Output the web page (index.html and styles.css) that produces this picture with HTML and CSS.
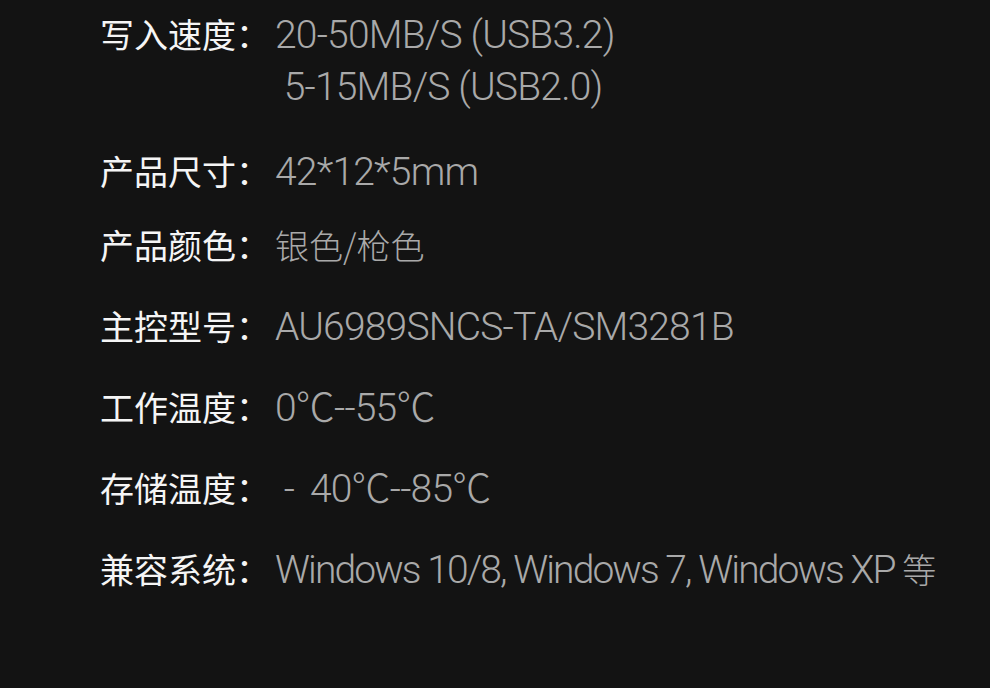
FILE: index.html
```html
<!DOCTYPE html>
<html lang="zh-CN">
<head>
    <meta charset="UTF-8">
    <meta name="viewport" content="width=device-width, initial-scale=1.0">
    <title>产品参数</title>
    <link rel="stylesheet" href="styles.css">
</head>
<body>
    <div class="specs">
        <!-- 写入速度 -->
        <div class="row row-first">
            <span class="label">写入速度：</span>
            <span class="value">20-50MB/S (USB3.2)<br>&nbsp;5-15MB/S (USB2.0)</span>
        </div>

        <div class="row row-tight">
            <span class="label">产品尺寸：</span>
            <span class="value">42*12*5mm</span>
        </div>

        <div class="row">
            <span class="label">产品颜色：</span>
            <span class="value"><span class="cjk">银色/枪色</span></span>
        </div>

        <div class="row">
            <span class="label">主控型号：</span>
            <span class="value">AU6989SNCS-TA/SM3281B</span>
        </div>

        <div class="row">
            <span class="label">工作温度：</span>
            <span class="value">0℃--55℃</span>
        </div>

        <div class="row">
            <span class="label">存储温度：</span>
            <span class="value">&nbsp;- &thinsp;40℃--85℃</span>
        </div>

        <div class="row">
            <span class="label">兼容系统：</span>
            <span class="value narrow">Windows 10/8, Windows 7, Windows XP <span class="cjk">等</span></span>
        </div>
    </div>
</body>
</html>
```

FILE: styles.css
```css
body {
    margin: 0;
    background-color: #131313;
    font-family: "Noto Sans CJK SC", "Noto Sans", sans-serif;
    height: 688px;
    overflow: hidden;
}

.specs {
    padding: 8px 0 0 100px;
}

.row {
    display: flex;
    align-items: baseline;
    height: 52px;
    margin-bottom: 29px;
    line-height: 52px;
}

.row-first {
    height: auto;
    margin-bottom: 32px;
}

.row-tight {
    margin-bottom: 22px;
}

.label {
    color: #f5f5f5;
    font-size: 34px;
    font-weight: 400;
    width: 175px;
    flex-shrink: 0;
    white-space: nowrap;
}

.value {
    color: #a9a9a9;
    font-family: Roboto, "Noto Sans CJK SC", sans-serif;
    font-size: 39px;
    font-weight: 300;
    letter-spacing: -0.8px;
    white-space: nowrap;
}

.value.narrow {
    letter-spacing: -1.9px;
}

.cjk {
    font-family: "Noto Sans CJK SC", sans-serif;
    font-size: 34px;
    letter-spacing: 0;
}
```
